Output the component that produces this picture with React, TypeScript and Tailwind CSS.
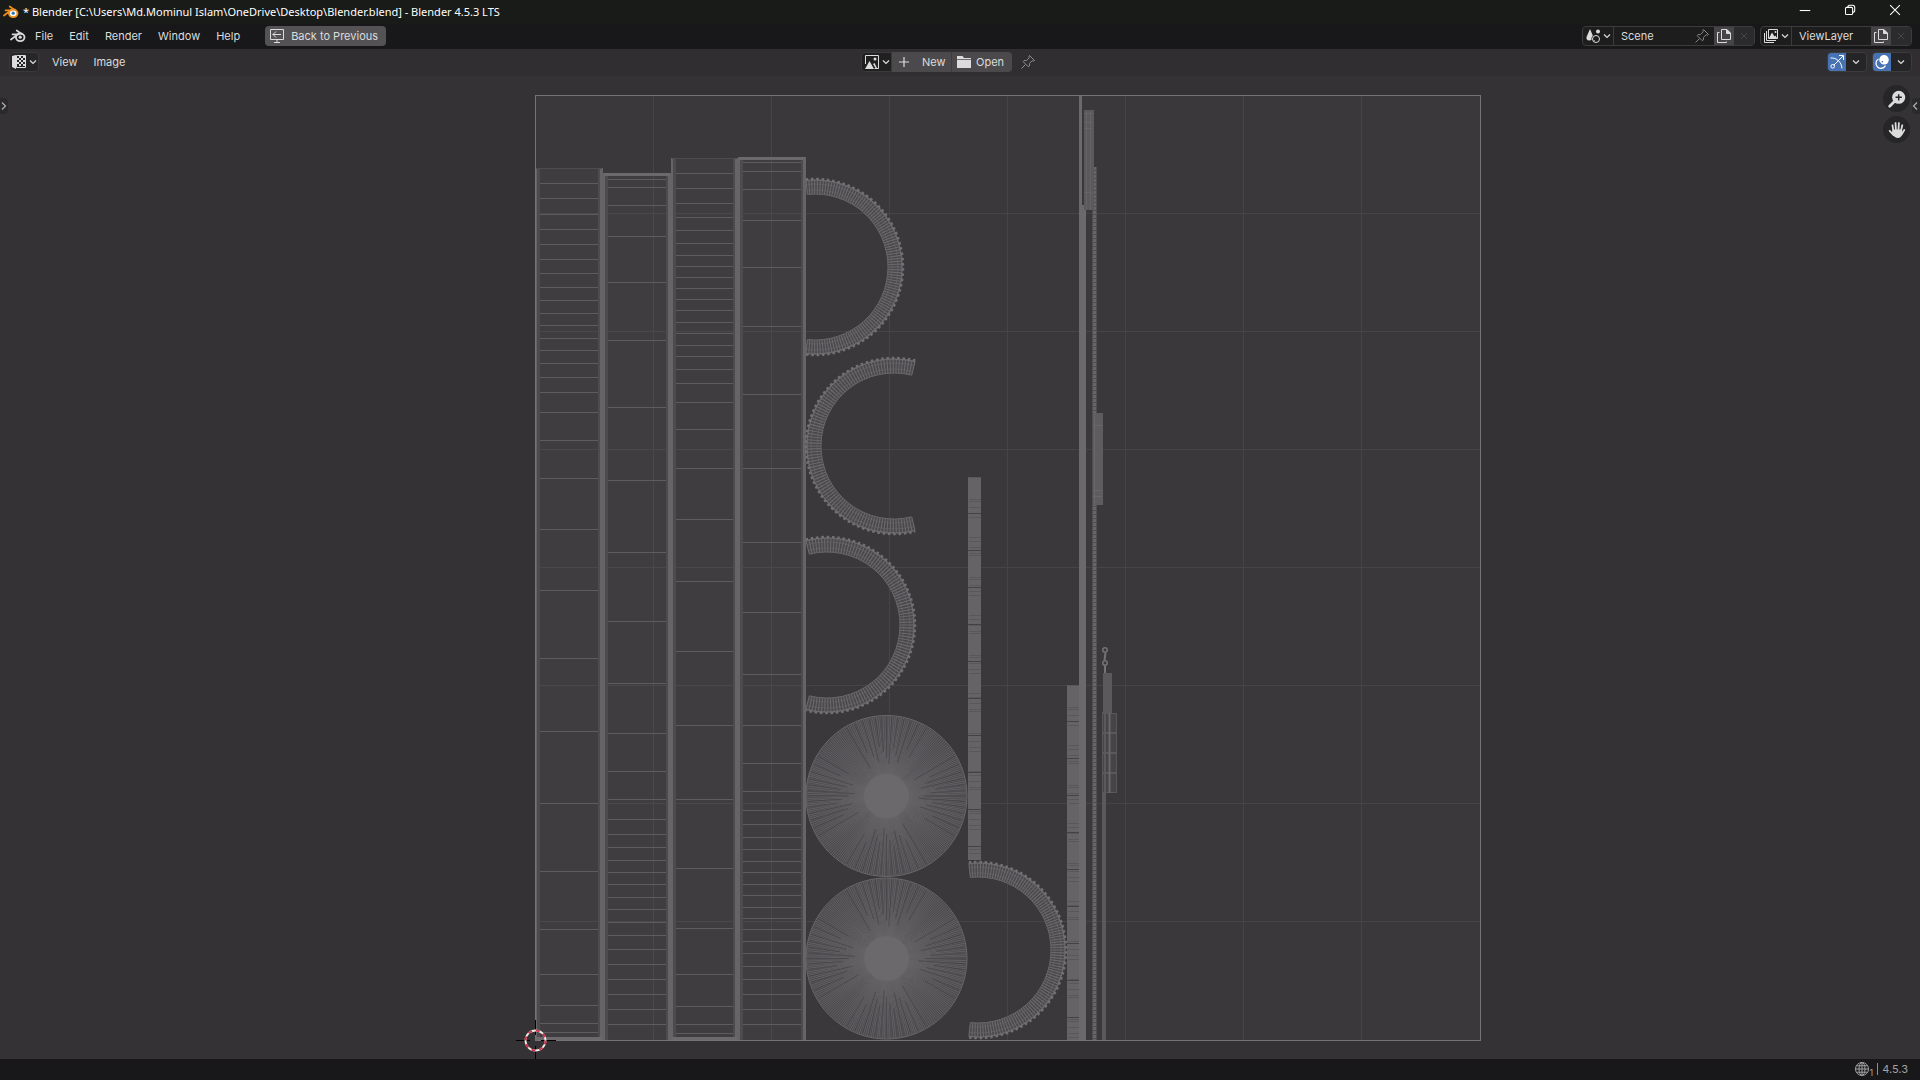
import { useState } from "react";
import type { ReactNode } from "react";

type Strip = {
  left: number;
  right: number;
  top: number;
  capAtTop: boolean;
  lines: number[];
};

type Ring = {
  cx: number;
  cy: number;
  r: number;
  overlap: number;
  flip?: boolean;
};

const strips: Strip[] = [
  {
    left: 536,
    right: 602,
    top: 168,
    capAtTop: false,
    lines: [
      183, 198, 214, 229, 244, 259, 273, 287, 300, 313, 325, 338, 350, 363, 377,
      392, 412, 440, 478, 529, 590, 658, 731, 803, 871, 929, 974, 1005, 1023,
      1032,
    ],
  },
  {
    left: 604,
    right: 670,
    top: 173,
    capAtTop: true,
    lines: [
      179, 187, 205, 236, 282, 340, 407, 480, 552, 621, 683, 733, 771, 799, 819,
      834, 847, 860, 872, 884, 897, 909, 922, 935, 949, 964, 979, 994, 1009,
      1024,
    ],
  },
  {
    left: 672,
    right: 737,
    top: 158,
    capAtTop: false,
    lines: [
      173, 188, 203, 217, 230, 243, 255, 266, 277, 288, 299, 310, 322, 333, 345,
      356, 369, 383, 402, 429, 468, 519, 581, 651, 725, 799, 868, 928, 974,
      1006, 1024, 1033,
    ],
  },
  {
    left: 739,
    right: 805,
    top: 157,
    capAtTop: true,
    lines: [
      162, 171, 189, 220, 267, 326, 394, 468, 542, 612, 674, 725, 763, 791, 810,
      824, 837, 849, 861, 872, 884, 895, 907, 918, 929, 941, 953, 966, 979, 994,
      1009, 1024,
    ],
  },
];

const rings: Ring[] = [
  { cx: 815, cy: 267, r: 87, overlap: 6 },
  { cx: 894, cy: 446, r: 87, overlap: 14, flip: true },
  { cx: 827, cy: 625, r: 87, overlap: 14 },
  { cx: 978, cy: 950, r: 87, overlap: 6 },
];

const gridSteps = [1, 2, 3, 4, 5, 6, 7];

function range(n: number) {
  return Array.from({ length: n }, (_, i) => i);
}

/* ---------- UV drawing ---------- */

function UvStrip({ left, right, top, capAtTop, lines }: Strip) {
  return (
    <g>
      <rect
        x={left}
        y={top}
        width={right - left}
        height={1040 - top}
        fill="#6b696c"
        fillOpacity="0.1"
      />
      {lines.map((y) => (
        <rect key={y} x={left + 1} y={y} width={right - left - 2} height="1" fill="#5e5c5f" />
      ))}
      <rect x={left - 1} y={top} width="2" height={1040 - top} fill="#666467" />
      <rect x={left + 1} y={top} width="3" height={1040 - top} fill="#4d4b4e" />
      <rect x={right - 2} y={top} width="3" height={1040 - top} fill="#666467" />
      <rect x={right - 4} y={top} width="2" height={1040 - top} fill="#4d4b4e" />
      {capAtTop ? (
        <rect x={left} y={top} width={right - left} height="3" fill="#6b696c" />
      ) : (
        <>
          <rect x={left} y={top} width={right - left} height="1" fill="#4e4c4f" />
          <rect x={left} y={1037} width={right - left} height="3" fill="#6b696c" />
        </>
      )}
    </g>
  );
}

function UvRing({ cx, cy, r, overlap, flip }: Ring) {
  const width = 14;
  const inner = r - width;
  const end = ((90 + overlap) * Math.PI) / 180;
  const dir = flip ? -1 : 1;
  const at = (radius: number, a: number) =>
    `${(cx + dir * radius * Math.cos(a)).toFixed(2)} ${(cy + radius * Math.sin(a)).toFixed(2)}`;
  const arc = (radius: number) =>
    `M${at(radius, -end)}A${radius} ${radius} 0 1 ${flip ? 0 : 1} ${at(radius, end)}`;
  const spokes = range(101)
    .map((i) => {
      const a = -end + (2 * end * i) / 100;
      return `M${at(inner, a)}L${at(r, a)}`;
    })
    .join("");

  return (
    <g fill="none">
      <path d={arc(r - width / 2)} stroke="#4a484b" strokeWidth={width} />
      <path d={spokes} stroke="#6b696c" strokeWidth="1.1" />
      <path d={arc(r - 4)} stroke="#69676a" strokeWidth="1" strokeOpacity="0.6" />
      <path d={arc(inner + 4)} stroke="#69676a" strokeWidth="1" strokeOpacity="0.5" />
      <path d={arc(inner)} stroke="#686669" strokeWidth="1" />
      <path d={arc(r)} stroke="#69676a" strokeWidth="1.5" />
      <path d={arc(r + 1)} stroke="#737174" strokeWidth="2.5" strokeDasharray="2.500 2.800" />
    </g>
  );
}

function UvDisc({ cx, cy }: { cx: number; cy: number }) {
  const spoke = (a: number, from: number, to: number) =>
    `M${(cx + from * Math.cos(a)).toFixed(2)} ${(cy + from * Math.sin(a)).toFixed(2)}L${(cx + to * Math.cos(a)).toFixed(2)} ${(cy + to * Math.sin(a)).toFixed(2)}`;
  const spokes = range(256)
    .map((i) => spoke((i * Math.PI) / 128 + 0.006 * Math.sin(i * 12.9), 0, 80))
    .join("");
  // gaps between faces, denser around the four axes
  const gaps = range(4)
    .flatMap((q) =>
      range(13).map((i) => {
        const t = (i - 6) / 6;
        const a = (q * Math.PI) / 2 + 0.42 * t + 0.11 * t * t * t;
        return spoke(a, 32 + ((i * 5) % 7) * 3, 79);
      })
    )
    .join("");

  return (
    <g fill="none" stroke="#6b696c">
      <circle cx={cx} cy={cy} r="80" fill="#4c4a4d" stroke="none" />
      <path d={spokes} strokeWidth="0.8" strokeOpacity="0.85" />
      <path d={gaps} stroke="#3d3b3e" strokeWidth="0.8" strokeOpacity="0.7" />
      <circle cx={cx} cy={cy} r="80.5" />
      <circle cx={cx} cy={cy} r="22" fill="#6b696c" />
    </g>
  );
}

function UvBar({ x, top, bottom }: { x: number; top: number; bottom: number }) {
  const rows = range(Math.floor((bottom - top) / 3));
  const marks = range(Math.floor((bottom - top) / 37));
  return (
    <g>
      <rect x={x} y={top} width="13" height={bottom - top} fill="#656366" />
      {rows.map((i) =>
        (i * i * 7 + i * 3) % 13 < 6 ? (
          <rect key={i} x={x + 1} y={top + i * 3 + (i % 2)} width="12" height="1" fill="#59575a" />
        ) : null
      )}
      {marks.map((i) => (
        <rect key={i} x={x} y={top + 36 + i * 37} width="13" height="1" fill="#444245" />
      ))}
    </g>
  );
}

function UvLayout() {
  return (
    <svg
      viewBox="0 76 1920 983"
      className="block h-full w-full"
      role="img"
      aria-label="UV layout"
    >
      <rect x="535" y="95" width="945" height="945" fill="#3a383b" />
      {gridSteps.map((n) => (
        <g key={n} fill="#464447">
          <rect x={535 + Math.floor(n * 118.1)} y="95" width="1" height="945" />
          <rect x="535" y={95 + Math.floor(n * 118.1)} width="945" height="1" />
        </g>
      ))}

      {strips.map((strip) => (
        <UvStrip key={strip.left} {...strip} />
      ))}
      {rings.map((ring) => (
        <UvRing key={ring.cy} {...ring} />
      ))}
      <UvDisc cx={886.5} cy={796} />
      <UvDisc cx={886.5} cy={958.5} />
      <UvBar x={968} top={477} bottom={860} />
      <UvBar x={1067} top={685} bottom={1040} />

      {/* Narrow islands right of the bars */}
      <rect x="1079" y="95" width="3" height="945" fill="#6b696c" />
      <rect x="1080" y="205" width="6" height="835" fill="#6b696c" />
      <rect x="1092" y="167" width="5" height="873" fill="#504e51" />
      <path d="M1094.500 167V1040" stroke="#676568" strokeWidth="3" strokeDasharray="3 1" />
      <rect x="1084" y="110" width="10" height="100" fill="#5b595c" />
      <path d="M1086.500 112V210M1090.500 112V210M1084 113.500H1093M1084 122.500H1093M1084 128.500H1093M1084 192.500H1093" stroke="#656366" />
      <rect x="1093" y="413" width="10" height="92" fill="#5e5c5f" />
      <path d="M1093 425.500H1102M1093 490.500H1102M1093 496.500H1102M1094.500 413V505" stroke="#69676a" />
      <rect x="1102" y="712" width="4" height="328" fill="#5b595c" />
      <rect x="1103" y="673" width="9" height="40" fill="#5b595c" />
      <rect x="1102.500" y="713.500" width="14" height="79" fill="#464447" stroke="#59575a" />
      <path d="M1102 733H1117M1102 753H1117M1102 773H1117M1105 713V793" stroke="#5b595c" strokeWidth="2" />
      <path d="M1109.500 713V793" stroke="#69676a" strokeWidth="2" />
      <g fill="none" stroke="#757376" strokeWidth="1.500">
        <circle cx="1105" cy="650" r="2.200" />
        <circle cx="1105" cy="663" r="2.200" />
        <path d="M1105.500 653L1104.500 660M1105 666V673" strokeWidth="2" />
      </g>

      <rect x="535.500" y="95.500" width="945" height="945" fill="none" stroke="#757376" />

      {/* 2D cursor */}
      <g fill="none">
        <path d="M535.500 1020V1035M535.500 1046V1059M516 1040.500H530M541 1040.500H556" stroke="#000" />
        <circle cx="535.500" cy="1040.500" r="10" stroke="#f0ece6" strokeWidth="1.800" />
        <circle cx="535.500" cy="1040.500" r="10" stroke="#cf2f4c" strokeWidth="2" strokeDasharray="3.930" />
      </g>
    </svg>
  );
}

/* ---------- Icons ---------- */

function Icon({ size = 16, children }: { size?: number; children: ReactNode }) {
  return (
    <svg
      width={size}
      height={size}
      viewBox="0 0 16 16"
      fill="none"
      stroke="currentColor"
      className="shrink-0"
      aria-hidden="true"
    >
      {children}
    </svg>
  );
}

function BlenderLogo({ colored }: { colored?: boolean }) {
  const main = colored ? "#ee8d1c" : "#d6d6d6";
  return (
    <Icon>
      <path d="M1 11.500L8.500 5.800M2.500 6.300H9M6.700 2.500L12 6.200" stroke={main} strokeWidth="1.700" strokeLinecap="round" />
      <ellipse cx="10.200" cy="9.300" rx="4.300" ry="3.800" stroke={main} strokeWidth="1.900" fill={colored ? "#fff" : "none"} />
      <circle cx="10.200" cy="9.200" r="1.600" fill={colored ? "#2d6fb0" : main} stroke="none" />
    </Icon>
  );
}

function Chevron() {
  return (
    <Icon size={8}>
      <path d="M2 5L8 11L14 5" strokeWidth="2.400" />
    </Icon>
  );
}

function PinIcon() {
  return (
    <Icon>
      <path d="M9.500 1.500L14.500 6.500L13.300 7.200L12.200 6.700L9.500 9.400L9.400 12L8.300 12.800L3.200 7.700L4 6.600L6.600 6.500L9.300 3.800L8.800 2.700ZM5.500 10.500L1.500 14.500" />
    </Icon>
  );
}

function CopyIcon() {
  return (
    <Icon>
      <path d="M5.500 1.500H11L14.500 5V11.500H5.500ZM3.500 4.500H1.500V14.500H10.500V13.500" />
      <path d="M10.500 1.500L14.500 5.500H10.500Z" fill="currentColor" />
    </Icon>
  );
}

function CrossIcon() {
  return (
    <Icon>
      <path d="M5 5L11 11M11 5L5 11" />
    </Icon>
  );
}

function SceneIcon() {
  return (
    <Icon>
      <path d="M5 1L8 8C8.600 11 7.500 12 6.500 12C3 13 1 12 1.500 9Z" fill="currentColor" stroke="none" />
      <circle cx="13" cy="3.500" r="2" fill="currentColor" stroke="none" />
      <circle cx="11" cy="11" r="4.600" fill="#1d1d1d" stroke="none" />
      <circle cx="11" cy="11" r="3.500" />
      <path d="M9 12.200A2 2 0 0 0 10 13" />
    </Icon>
  );
}

function LayersIcon() {
  return (
    <Icon>
      <path d="M1.500 5V14.500H11M3.500 3V12.500H13M5.500 1.500H14.500V10.500H5.500Z" />
      <path d="M6 10L9 4.500L11.500 8.500L12.500 7.500L14 10Z" fill="currentColor" stroke="none" />
      <circle cx="12.500" cy="4" r="1" fill="currentColor" stroke="none" />
    </Icon>
  );
}

function UvEditorIcon() {
  return (
    <Icon>
      <path d="M1 2L5 1V15L1 13Z" fill="currentColor" stroke="none" />
      <path d="M5.500 1.500H14.500V13.500H5.500Z" />
      <path d="M8 2H10V4H8ZM12 2H14V4H12ZM6 4H8V6H6ZM10 4H12V6H10ZM8 6H10V8H8ZM12 6H14V8H12ZM6 8H8V10H6ZM10 8H12V10H10ZM8 10H10V12H8ZM12 10H14V12H12Z" fill="currentColor" stroke="none" />
    </Icon>
  );
}

function ImageIcon() {
  return (
    <Icon>
      <path d="M10.500 14.500H14.500V1.500H1.500V10" />
      <path d="M1 15L5.500 7L10 15Z" fill="currentColor" stroke="none" />
      <path d="M9 10L10.500 9L13 14H11.500Z" fill="currentColor" stroke="none" />
      <circle cx="11" cy="5" r="1.500" fill="currentColor" stroke="none" />
    </Icon>
  );
}

function BackIcon() {
  return (
    <Icon>
      <path d="M1.500 1.500H14.500V11.500H1.500ZM3.500 6.500H12M7 3.500L4 6.500L7 9.500M8 11.500V14M5 14.500H11" />
    </Icon>
  );
}

function FolderIcon() {
  return (
    <Icon>
      <path d="M1 2H6.500L8 4H15V5.200H1ZM1 6H15V14H1Z" fill="currentColor" stroke="none" />
    </Icon>
  );
}

function GizmoIcon() {
  return (
    <Icon>
      <path d="M1.500 4C7.500 3.500 12.500 8 13 14.500M5 11L14 2M10 1.500H14.500V6" />
      <circle cx="3.700" cy="12.300" r="1.800" />
    </Icon>
  );
}

function OverlayIcon() {
  return (
    <Icon>
      <circle cx="10" cy="5.800" r="4.800" fill="currentColor" stroke="none" />
      <path d="M4.500 5A5 5 0 1 0 11.500 11.500" strokeWidth="1.300" />
      <path d="M6 10L9.500 6.500" stroke="#4772b3" strokeWidth="1.200" strokeDasharray="1.500 1" />
    </Icon>
  );
}

function GlobeIcon() {
  return (
    <Icon>
      <circle cx="8" cy="8" r="6.500" />
      <ellipse cx="8" cy="8" rx="3" ry="6.500" />
      <path d="M1.500 8H14.500M2.500 4.800H13.500M2.500 11.200H13.500M8 1.500V14.500" />
    </Icon>
  );
}

/* ---------- Bars ---------- */

function TitleBar() {
  return (
    <div className="flex h-6 items-center bg-[#181b18] pl-[3px] text-white">
      <BlenderLogo colored />
      <h1 className="ml-1 truncate font-['Noto_Sans','Open_Sans',sans-serif] text-[11px] font-normal">
        * Blender [C:\Users\Md.Mominul Islam\OneDrive\Desktop\Blender.blend] - Blender 4.5.3 LTS
      </h1>
      <div className="ml-auto flex pr-[3px] pb-1">
        <button className="flex w-[45px] justify-center" aria-label="Minimize">
          <Icon size={12}>
            <path d="M1 8.700H15" strokeWidth="1.400" />
          </Icon>
        </button>
        <button className="flex w-[45px] justify-center" aria-label="Restore">
          <Icon size={12}>
            <path d="M2 6Q2 4.500 3.500 4.500H10Q11.500 4.500 11.500 6V12.500Q11.500 14 10 14H3.500Q2 14 2 12.500ZM5 4.500Q5 1.700 7.500 1.700H11.500Q14.300 1.700 14.300 4.500V8.500Q14.300 11 11.500 11" strokeWidth="1.400" />
          </Icon>
        </button>
        <button className="flex w-[45px] justify-center" aria-label="Close">
          <Icon size={12}>
            <path d="M1.500 1.500L14.500 14.500M14.500 1.500L1.500 14.500" strokeWidth="1.400" />
          </Icon>
        </button>
      </div>
    </div>
  );
}

type DataBlockProps = {
  label: string;
  value: string;
  icon: ReactNode;
  inputClass: string;
  pinned?: boolean;
};

function DataBlock({ label, value, icon, inputClass, pinned }: DataBlockProps) {
  const [name, setName] = useState(value);
  return (
    <div className="flex h-5 items-stretch overflow-hidden rounded border border-[#3c3c3c] bg-[#1d1d1d]">
      <button className="flex w-[31px] items-center justify-center gap-0.5 border-r border-[#3c3c3c]" aria-label={`Browse ${label}`}>
        {icon}
        <Chevron />
      </button>
      <input
        aria-label={label}
        value={name}
        onChange={(e) => setName(e.target.value)}
        className={`bg-transparent pl-[7px] outline-none ${inputClass}`}
      />
      {pinned && (
        <button className="flex w-5 items-center text-[#858585]" aria-label={`Pin ${label}`}>
          <PinIcon />
        </button>
      )}
      <button className="flex w-5 items-center justify-center bg-[#464446]" aria-label={`New ${label}`}>
        <CopyIcon />
      </button>
      <button className="flex w-5 items-center justify-center bg-[#2b2a2c] text-[#454545]" aria-label={`Remove ${label}`}>
        <CrossIcon />
      </button>
    </div>
  );
}

function MenuBar() {
  return (
    <div className="flex h-[26px] items-center border-b border-[#2f2e30] bg-[#181719] pr-2 pb-px pl-2.5">
      <button aria-label="Blender menu">
        <BlenderLogo />
      </button>
      <nav className="ml-[9px] flex gap-4">
        {["File", "Edit", "Render", "Window", "Help"].map((item) => (
          <button key={item}>{item}</button>
        ))}
      </nav>
      <button className="ml-[25px] flex h-5 items-center gap-1.5 rounded bg-[#545254] pr-2 pl-1">
        <BackIcon />
        Back to Previous
      </button>
      <div className="ml-auto flex gap-[5px]">
        <DataBlock label="Scene" value="Scene" icon={<SceneIcon />} inputClass="w-[80px]" pinned />
        <DataBlock label="ViewLayer" value="ViewLayer" icon={<LayersIcon />} inputClass="w-[79px]" />
      </div>
    </div>
  );
}

function ToggleGroup({ label, children }: { label: string; children: ReactNode }) {
  return (
    <div className="flex h-5 overflow-hidden rounded border border-[#3c3c3c] bg-[#252426]">
      <button className="flex w-[18px] items-center justify-center bg-[#4772b3] text-white" aria-label={label}>
        {children}
      </button>
      <button className="flex w-5 items-center justify-center" aria-label={`${label} options`}>
        <Chevron />
      </button>
    </div>
  );
}

function EditorHeader() {
  return (
    <div className="grid h-[26px] grid-cols-[1fr_auto_1fr] items-center bg-[#302e30] pr-2 pb-0.5 pl-[9px]">
      <div className="flex items-center">
        <button className="flex h-5 w-[30px] items-center justify-center gap-0.5 rounded border border-[#3a393b] bg-[#262527]" aria-label="Editor type">
          <UvEditorIcon />
          <Chevron />
        </button>
        <nav className="ml-[13px] flex gap-4">
          <button>View</button>
          <button>Image</button>
        </nav>
      </div>

      <div className="flex items-center pr-6">
        <button className="flex h-5 w-[31px] items-center justify-center gap-0.5 rounded-l border border-[#3a393b] bg-[#202021]" aria-label="Browse image">
          <ImageIcon />
          <Chevron />
        </button>
        <button className="flex h-5 w-[60px] items-center gap-2.5 border-r border-[#3d3b3d] bg-[#4b494b] pl-1">
          <Icon>
            <path d="M8 3V13M3 8H13" strokeWidth="1.200" />
          </Icon>
          New
        </button>
        <button className="flex h-5 w-[60px] items-center gap-1 rounded-r bg-[#4b494b] pl-1">
          <FolderIcon />
          Open
        </button>
        <button className="ml-2 text-[#8f8f8f]" aria-label="Pin image">
          <PinIcon />
        </button>
      </div>

      <div className="flex justify-end gap-[5px]">
        <ToggleGroup label="Show gizmos">
          <GizmoIcon />
        </ToggleGroup>
        <ToggleGroup label="Show overlays">
          <OverlayIcon />
        </ToggleGroup>
      </div>
    </div>
  );
}

function StatusBar() {
  return (
    <footer className="flex h-[21px] items-center justify-end bg-[#181719] pr-3 pb-px text-[#a3a3a3]">
      <GlobeIcon />
      <span className="self-end text-[9px] leading-3">1</span>
      <span className="mx-1 h-3 w-px bg-[#8f8f8f]" />
      <span>4.5.3</span>
    </footer>
  );
}

export default function App() {
  return (
    <div className="flex h-screen flex-col overflow-hidden bg-[#343235] font-[Inter,sans-serif] text-[11px] leading-4 text-[#dcdcdc]">
      <TitleBar />
      <MenuBar />
      <EditorHeader />

      <main className="relative min-h-0 flex-1">
        <UvLayout />

        {/* Region toggles */}
        <button className="absolute top-[22px] left-0 flex h-4 w-2 items-center rounded-r bg-[#2a292b] text-[#b0b0b0]" aria-label="Show toolbar">
          <Icon size={8}>
            <path d="M4 1L11 8L4 15" strokeWidth="2.400" />
          </Icon>
        </button>
        <button className="absolute top-[22px] right-0 flex h-4 w-2 items-center rounded-l bg-[#2a292b] text-[#b0b0b0]" aria-label="Show sidebar">
          <Icon size={8}>
            <path d="M10 1L3 8L10 15" strokeWidth="2.400" />
          </Icon>
        </button>

        {/* Navigation gizmos */}
        <div className="absolute top-[9px] right-2.5 flex flex-col gap-1">
          <button className="flex size-[27px] items-center justify-center rounded-full bg-[#262527]" aria-label="Zoom">
            <Icon size={18}>
              <circle cx="9.500" cy="6.500" r="5.800" fill="currentColor" stroke="none" />
              <path d="M5.500 10.500L1.500 14.500" strokeWidth="2.400" strokeLinecap="round" />
              <path d="M9.500 3.700V9.300M6.700 6.500H12.300" stroke="#262527" strokeWidth="1.300" />
            </Icon>
          </button>
          <button className="flex size-[27px] items-center justify-center rounded-full bg-[#262527]" aria-label="Pan">
            <Icon size={18}>
              <path d="M4.800 9L4 3.800M7 8L6.700 1.800M9.300 8L9.700 1.800M11.500 9L12.700 3.800M5 12.500L1.500 8.700M12 12L14.500 8" strokeWidth="1.600" strokeLinecap="round" />
              <path d="M4 7.500H12.300L13 10.500C12.500 13 11.500 15 9 15C6.500 15 5 13.500 3.500 11Z" fill="currentColor" stroke="none" />
            </Icon>
          </button>
        </div>
      </main>

      <StatusBar />
    </div>
  );
}
